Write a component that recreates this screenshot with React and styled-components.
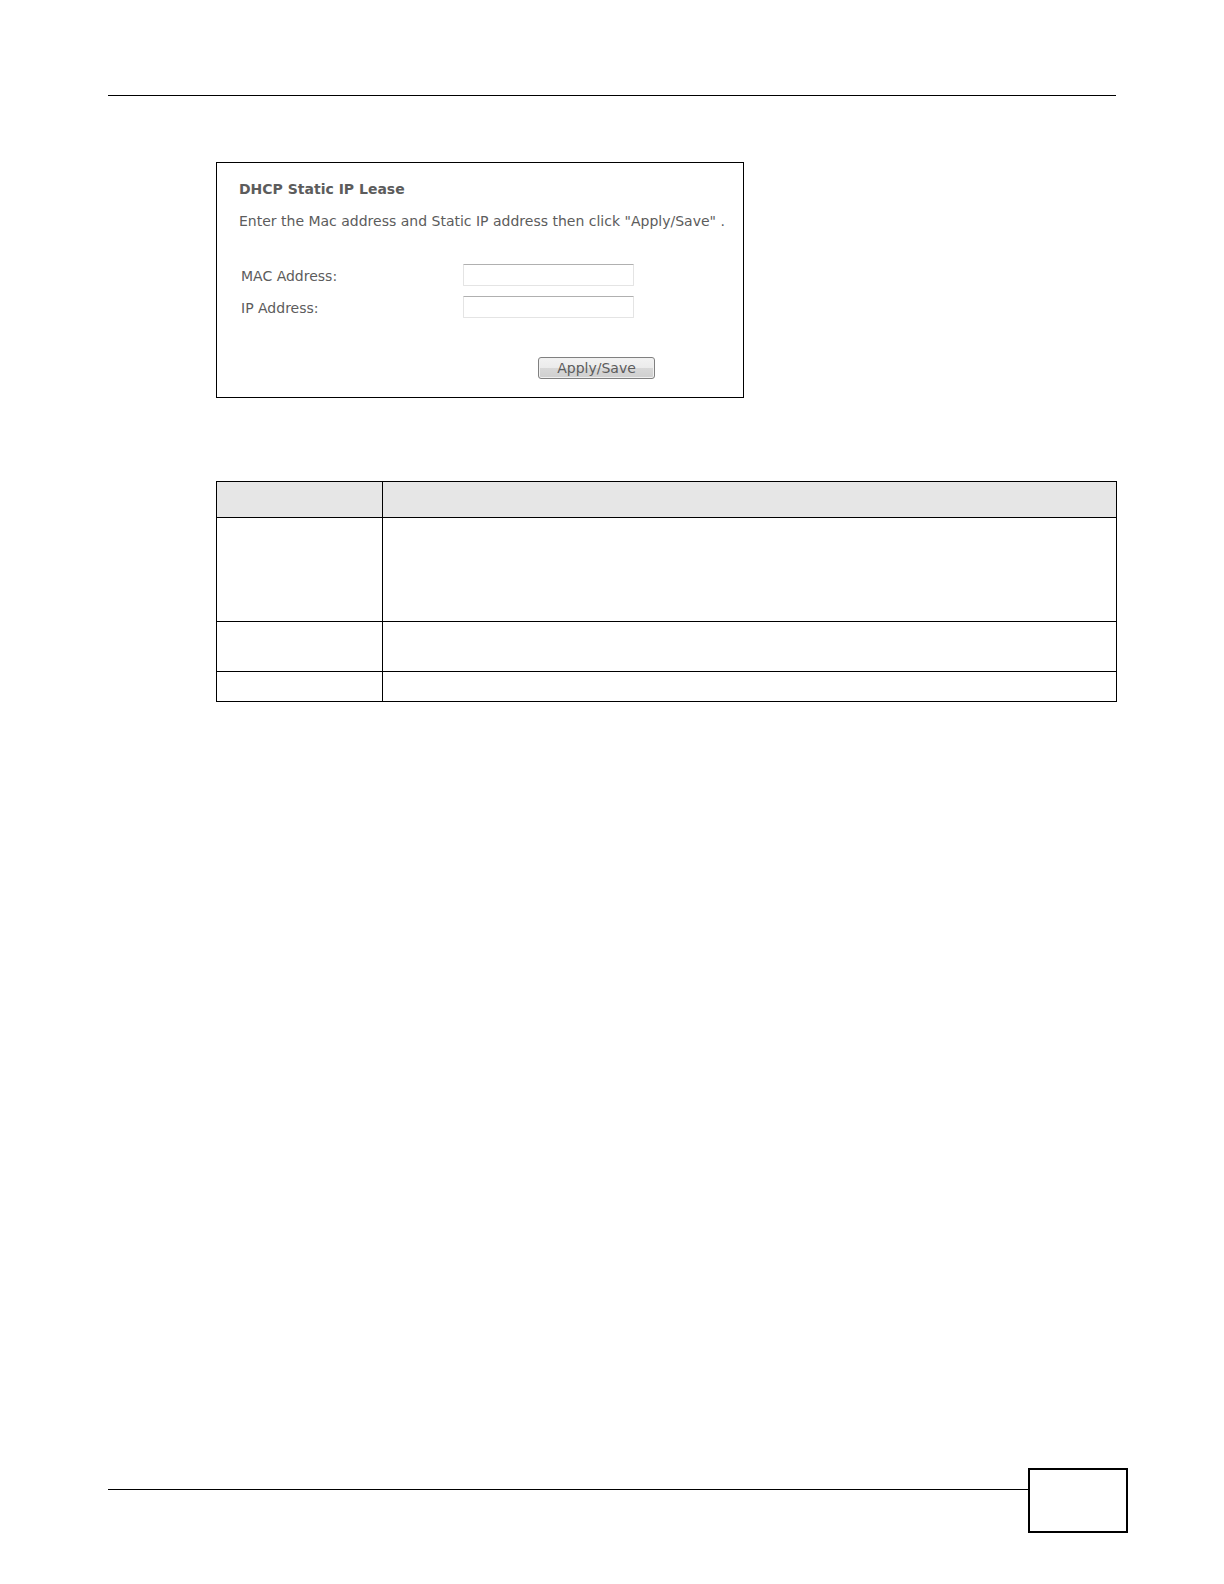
import React, { useState } from 'react';
import styled, { createGlobalStyle } from 'styled-components';

const rows = [
  { id: 'first', height: 104 },
  { id: 'second', height: 50 },
  { id: 'third', height: 30 },
];

const App = ()=>{
  const [mac, setMac] = useState('');
  const [ip, setIp] = useState('');

  return (
    <Page>
      <GlobalStyle />
      <Header />
      <Main>
        <LeaseForm onSubmit={(e)=> e.preventDefault()}>
          <Title>DHCP Static IP Lease</Title>
          <Hint>Enter the Mac address and Static IP address then click "Apply/Save" .</Hint>
          <Fields>
            <Label htmlFor='mac'>MAC Address:</Label>
            <Input id='mac' value={mac} onChange={(e)=> setMac(e.target.value)} />
            <Label htmlFor='ip'>IP Address:</Label>
            <Input id='ip' value={ip} onChange={(e)=> setIp(e.target.value)} />
          </Fields>
          <Actions>
            <ApplyBtn type='submit'>Apply/Save</ApplyBtn>
          </Actions>
        </LeaseForm>
        <Table>
          <thead>
            <Row $height={36}>
              <HeadCell $narrow />
              <HeadCell />
            </Row>
          </thead>
          <tbody>
            {rows.map((row)=> (
              <Row key={row.id} $height={row.height}>
                <Cell />
                <Cell />
              </Row>
            ))}
          </tbody>
        </Table>
      </Main>
      <Footer>
        <FooterRule />
        <PageBox />
      </Footer>
    </Page>
  )
}

export default App;


const GlobalStyle = createGlobalStyle`
  * {
    box-sizing: border-box;
  }
  body {
    margin: 0;
    background: #fff;
    color: #5c5c5c;
    font-family: Verdana, 'DejaVu Sans', sans-serif;
    font-size: 14px;
    line-height: 16px;
  }
`

const Page = styled.div`
  min-height: 100vh;
  display: flex;
  flex-direction: column;
`

const Header = styled.header`
  margin: 95px 108px 0;
  border-top: 1px solid #000;
`

const Main = styled.main`
  padding: 66px 107px 48px 216px;
`

const LeaseForm = styled.form`
  width: 100%;
  max-width: 528px;
  padding: 18px 22px;
  border: 1px solid #000;
`

const Title = styled.h1`
  margin: 0;
  font-size: 14px;
  font-weight: bold;
`

const Hint = styled.p`
  margin: 16px 0 35px;
  white-space: nowrap;
`

const Fields = styled.div`
  display: grid;
  grid-template-columns: 222px 171px;
  row-gap: 10px;
  align-items: center;
  padding-left: 2px;
`

const Label = styled.label`
  padding-top: 2px;
`

const Input = styled.input`
  width: 100%;
  height: 22px;
  padding: 0 4px;
  border: 1px solid #e4e4e4;
  border-top-color: #b0b0b0;
  border-radius: 1px;
  background: #fff;
  color: inherit;
  font: inherit;
`

const Actions = styled.div`
  display: flex;
  justify-content: flex-end;
  margin-top: 39px;
  padding-right: 66px;
`

const ApplyBtn = styled.button`
  width: 117px;
  height: 22px;
  padding: 0;
  border: 1px solid #808080;
  border-radius: 3px;
  background: linear-gradient(#f2f2f2, #ebebeb 50%, #d8d8d8 50%, #cfcfcf);
  box-shadow: inset 0 0 0 1px #f0f0f0;
  color: inherit;
  font: inherit;
  cursor: pointer;
`

const Table = styled.table`
  width: 100%;
  margin-top: 83px;
  border-collapse: collapse;
  table-layout: fixed;
`

const Row = styled.tr`
  height: ${({ $height }) => $height}px;
`

const Cell = styled.td`
  padding: 0;
  border: 1px solid #000;
`

const HeadCell = styled.th`
  width: ${({ $narrow }) => $narrow ? '166px' : 'auto'};
  padding: 0;
  border: 1px solid #000;
  background: #e6e6e6;
`

const Footer = styled.footer`
  display: flex;
  margin-top: auto;
  padding: 0 96px 51px 108px;
`

const FooterRule = styled.div`
  flex: 1;
  margin-top: 21px;
  border-top: 1px solid #000;
`

const PageBox = styled.div`
  width: 100px;
  height: 65px;
  border: 2px solid #000;
`
